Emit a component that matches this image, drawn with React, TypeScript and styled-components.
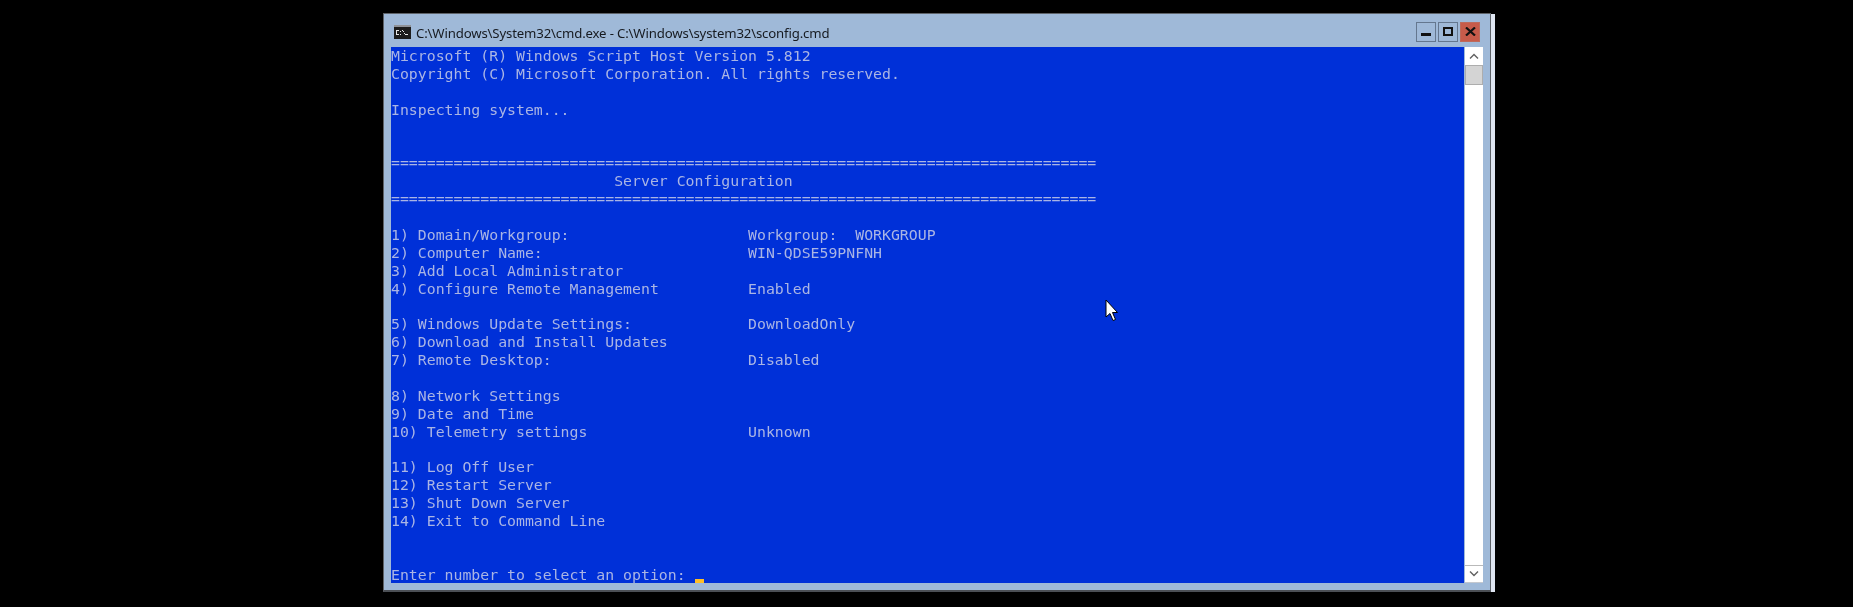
import React from 'react';
import styled, { createGlobalStyle } from 'styled-components';

const GlobalStyle = createGlobalStyle`
    html, body {
        margin: 0;
        background: #000;
    }
`;

const Page = styled.div`
    position: relative;
    width: 1853px;
    height: 607px;
    overflow: hidden;
    background: #000;
    box-sizing: border-box;
    padding: 13px 0 0 383px;
`;

const Frame = styled.div`
    display: flex;
    width: 1112px;
    height: 579px;
`;

const Window = styled.div`
    width: 1108px;
    display: flex;
    flex-direction: column;
    box-sizing: border-box;
    background: #9fb9d8;
    border: 1px solid #5d6268;
    border-bottom: 2px solid #4b4f55;
    padding: 0 7px 7px 7px;
    filter: blur(0.3px);
`;

const EdgeStrip = styled.div`
    width: 4px;
    margin-top: 1px;
    background: #dfe6f2;
    filter: blur(0.3px);
`;

const TitleBar = styled.div`
    height: 33px;
    flex: none;
    display: flex;
    align-items: center;
    padding-left: 3px;
    gap: 5px;
`;

const IconSlot = styled.div`
    display: flex;
    padding-top: 3px;
`;

const Title = styled.div`
    flex: 1;
    font-family: 'Noto Sans', sans-serif;
    font-size: 13.2px;
    letter-spacing: -0.15px;
    color: #161a20;
    white-space: nowrap;
    padding-top: 5px;
`;

const Controls = styled.div`
    display: flex;
    gap: 2px;
    margin-right: 3px;
    padding-top: 2px;
`;

const ControlButton = styled.div<{ $close?: boolean }>`
    width: 20px;
    height: 20px;
    box-sizing: border-box;
    display: flex;
    align-items: center;
    justify-content: center;
    background: ${(p) => (p.$close ? '#c75b4a' : '#9fb9d8')};
    border: 1px solid ${(p) => (p.$close ? '#bd6a5c' : '#64778f')};
`;

const Client = styled.div`
    flex: 1;
    display: flex;
    min-height: 0;
`;

const Console = styled.div`
    flex: 1;
    background: #0030d8;
    color: #aab5e4;
    font-family: 'DejaVu Sans Mono', monospace;
    font-size: 14.83px;
    line-height: 17.9px;
    overflow: hidden;
`;

const Row = styled.div`
    height: 17.9px;
    white-space: pre;
    filter: blur(0.4px);
`;

const Caret = styled.span`
    display: inline-block;
    width: 9px;
    height: 5px;
    background: #ffbe28;
    vertical-align: -4px;
`;

const ScrollBar = styled.div`
    width: 18px;
    margin-left: 1px;
    display: flex;
    flex-direction: column;
    background: #fff;
`;

const ScrollButton = styled.div<{ $down?: boolean }>`
    height: 18px;
    flex: none;
    display: flex;
    align-items: center;
    justify-content: center;
    box-sizing: border-box;
    background: #fff;
    ${(p) => (p.$down ? 'border-top: 1px solid #b9b9b9; border-bottom: 1px solid #c4c8cf; margin-top: auto;' : '')}
`;

const ScrollThumb = styled.div`
    height: 20px;
    box-sizing: border-box;
    background: #d4d4d4;
    border: 1px solid #adadad;
`;

const Pointer = styled.svg`
    position: absolute;
    left: 1105px;
    top: 299px;
`;

const lines = [
    'Microsoft (R) Windows Script Host Version 5.812',
    'Copyright (C) Microsoft Corporation. All rights reserved.',
    '',
    'Inspecting system...',
    '',
    '',
    '='.repeat(79),
    '                         Server Configuration',
    '='.repeat(79),
    '',
    '1) Domain/Workgroup:                    Workgroup:  WORKGROUP',
    '2) Computer Name:                       WIN-QDSE59PNFNH',
    '3) Add Local Administrator',
    '4) Configure Remote Management          Enabled',
    '',
    '5) Windows Update Settings:             DownloadOnly',
    '6) Download and Install Updates',
    '7) Remote Desktop:                      Disabled',
    '',
    '8) Network Settings',
    '9) Date and Time',
    '10) Telemetry settings                  Unknown',
    '',
    '11) Log Off User',
    '12) Restart Server',
    '13) Shut Down Server',
    '14) Exit to Command Line',
    '',
    '',
];

const CmdIcon = () => (
    <svg width="17" height="14" viewBox="0 0 17 14">
        <rect width="17" height="14" fill="#1c1c1c" />
        <rect width="17" height="2" fill="#8f9298" />
        <path d="M2 5H5V6H3V9H5V10H2ZM6 6H7V7H6ZM6 9H7V10H6ZM8 5H9V6H8ZM9 6H10V7H9ZM10 8H11V9H10ZM11 9H14V10H11Z" fill="#e8e8e8" />
    </svg>
);

const App: React.FC = () => {
    return (
        <>
            <GlobalStyle />
            <Page>
                <Frame>
                    <Window>
                        <TitleBar>
                            <IconSlot>
                                <CmdIcon />
                            </IconSlot>
                            <Title>C:\Windows\System32\cmd.exe - C:\Windows\system32\sconfig.cmd</Title>
                            <Controls>
                                <ControlButton>
                                    <svg width="10" height="8" viewBox="0 0 10 8">
                                        <rect y="5" width="10" height="3" fill="#111" />
                                    </svg>
                                </ControlButton>
                                <ControlButton>
                                    <svg width="10" height="9" viewBox="0 0 10 9">
                                        <rect x="1" y="1" width="8" height="7" fill="none" stroke="#111" strokeWidth="2" />
                                    </svg>
                                </ControlButton>
                                <ControlButton $close>
                                    <svg width="11" height="9" viewBox="0 0 11 9">
                                        <path d="M1 0.5L10 8.5M10 0.5L1 8.5" stroke="#111" strokeWidth="2.2" />
                                    </svg>
                                </ControlButton>
                            </Controls>
                        </TitleBar>
                        <Client>
                            <Console>
                                {lines.map((line, i) => (
                                    <Row key={i}>{line}</Row>
                                ))}
                                <Row>
                                    {'Enter number to select an option: '}
                                    <Caret />
                                </Row>
                            </Console>
                            <ScrollBar>
                                <ScrollButton>
                                    <svg width="10" height="6" viewBox="0 0 10 6">
                                        <path d="M1 5.5L5 1.5L9 5.5" stroke="#606060" strokeWidth="1.4" fill="none" />
                                    </svg>
                                </ScrollButton>
                                <ScrollThumb />
                                <ScrollButton $down>
                                    <svg width="10" height="6" viewBox="0 0 10 6">
                                        <path d="M1 0.5L5 4.5L9 0.5" stroke="#606060" strokeWidth="1.4" fill="none" />
                                    </svg>
                                </ScrollButton>
                            </ScrollBar>
                        </Client>
                    </Window>
                    <EdgeStrip />
                </Frame>
                <Pointer width="14" height="24" viewBox="0 0 14 24">
                    <path
                        d="M1 1V18L5 14.5L8 21.5L10.5 20.5L7.5 13.5H12.5Z"
                        fill="#fff"
                        stroke="#000"
                        strokeWidth="1"
                    />
                </Pointer>
            </Page>
        </>
    );
};

export default App;
